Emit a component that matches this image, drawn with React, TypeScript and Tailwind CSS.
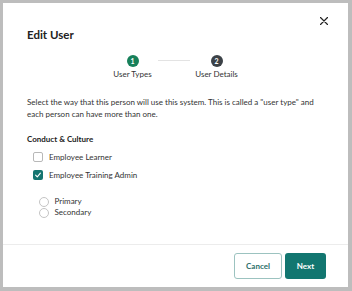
import React from "react";

export default function App() {
  const font = { fontFamily: "Lato, 'Noto Sans', sans-serif" };
  return (
    <div
      className="relative w-[352px] h-[291px] bg-[#bdbdbd] pl-[3px] pt-[3px] pr-[4px] pb-[4px] overflow-hidden"
      style={font}
    >
      <span className="absolute left-[-7px] top-[51px] text-[9px] text-[#555]">ai</span>
      <div className="relative w-[345px] h-[284px] bg-white flex flex-col">
        <button className="absolute top-[14px] right-[20px] w-[8px] h-[8px]" aria-label="Close">
          <svg viewBox="0 0 8 8" width="8" height="8">
            <path d="M0.5 0.5 L7.5 7.5 M7.5 0.5 L0.5 7.5" stroke="#222" strokeWidth="1.2" strokeLinecap="round" />
          </svg>
        </button>
        <div className="px-[24px] pt-[25px]">
          <h2 className="text-[11.5px] leading-[14px] font-bold text-[#222]">Edit User</h2>
        </div>
        <div className="mt-[13px] flex justify-center items-start">
          <div className="w-[40px] flex flex-col items-center">
            <div className="w-[12px] h-[12px] rounded-full bg-[#17805a] text-white text-[7px] font-bold flex items-center justify-center leading-none">
              1
            </div>
            <div className="mt-[2px] text-[8px] leading-[10px] text-[#333] whitespace-nowrap">User Types</div>
          </div>
          <div className="w-[32px] h-px bg-[#e3e3e3] mt-[5px] mx-[5px]" />
          <div className="w-[44px] flex flex-col items-center">
            <div className="w-[12px] h-[12px] rounded-full bg-[#3c4247] text-white text-[7px] font-bold flex items-center justify-center leading-none">
              2
            </div>
            <div className="mt-[2px] text-[8px] leading-[10px] text-[#333] whitespace-nowrap">User Details</div>
          </div>
        </div>
        <div className="px-[24px]">
          <p className="mt-[17px] w-[298px] text-[8px] leading-[12px] text-[#333]">
            Select the way that this person will use this system. This is called a "user type" and each person can
            have more than one.
          </p>
          <div className="mt-[13px] text-[8px] leading-[12px] font-bold text-[#222]">Conduct &amp; Culture</div>
          <div className="mt-[6px] ml-[6px] flex flex-col gap-[6px]">
            <label className="flex items-center h-[12px] gap-[6px]">
              <span className="w-[10px] h-[10px] rounded-[2px] border border-[#b8b8b8] bg-white" />
              <span className="text-[8px] leading-[12px] text-[#333]">Employee Learner</span>
            </label>
            <label className="flex items-center h-[12px] gap-[6px]">
              <span className="w-[10px] h-[10px] rounded-[2px] bg-[#157570] flex items-center justify-center">
                <svg viewBox="0 0 10 10" width="8" height="8">
                  <path d="M2 5.2 L4.1 7.3 L8 2.6" stroke="white" strokeWidth="1.4" fill="none" strokeLinecap="round" strokeLinejoin="round" />
                </svg>
              </span>
              <span className="text-[8px] leading-[12px] text-[#333]">Employee Training Admin</span>
            </label>
          </div>
          <div className="mt-[15px] ml-[12px] flex flex-col">
            <label className="flex items-center h-[11px] gap-[5.5px]">
              <span className="w-[10px] h-[10px] rounded-full border border-[#c4c4c4] bg-white" />
              <span className="text-[8px] leading-[11px] text-[#333]">Primary</span>
            </label>
            <label className="flex items-center h-[11px] gap-[5.5px]">
              <span className="w-[10px] h-[10px] rounded-full border border-[#c4c4c4] bg-white" />
              <span className="text-[8px] leading-[11px] text-[#333]">Secondary</span>
            </label>
          </div>
        </div>
        <div className="flex-1" />
        <div className="border-t border-[#ececec] pt-[8px] pb-[8px] pr-[22px] flex justify-end gap-[3px]">
          <button className="w-[48px] h-[26px] rounded-[3px] border border-[#9cc3c0] bg-white text-[8px] font-bold text-[#2c6f6a]">
            Cancel
          </button>
          <button className="w-[41px] h-[26px] rounded-[3px] bg-[#127670] text-[8px] font-bold text-white">
            Next
          </button>
        </div>
      </div>
    </div>
  );
}
